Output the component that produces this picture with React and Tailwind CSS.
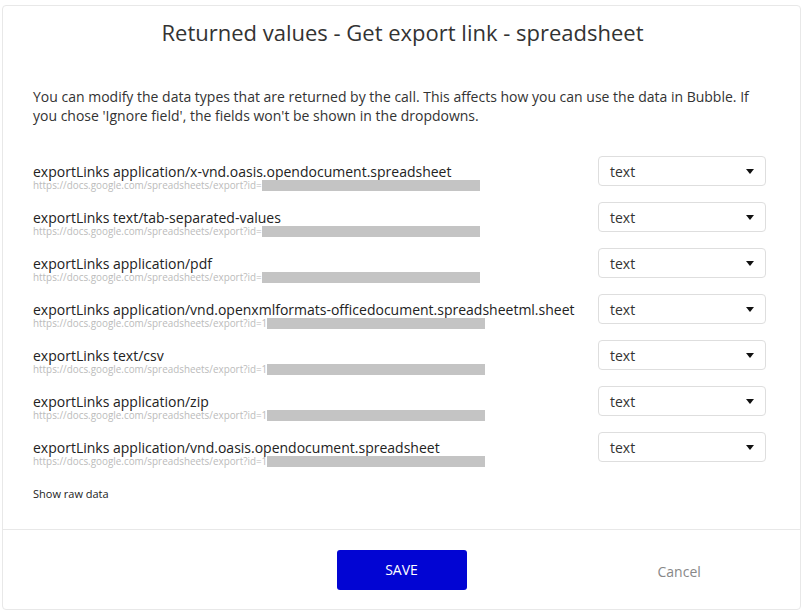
const rows = [
      { label: "exportLinks application/x-vnd.oasis.opendocument.spreadsheet", url: "https://docs.google.com/spreadsheets/export?id=" },
      { label: "exportLinks text/tab-separated-values", url: "https://docs.google.com/spreadsheets/export?id=" },
      { label: "exportLinks application/pdf", url: "https://docs.google.com/spreadsheets/export?id=" },
      { label: "exportLinks application/vnd.openxmlformats-officedocument.spreadsheetml.sheet", url: "https://docs.google.com/spreadsheets/export?id=1" },
      { label: "exportLinks text/csv", url: "https://docs.google.com/spreadsheets/export?id=1" },
      { label: "exportLinks application/zip", url: "https://docs.google.com/spreadsheets/export?id=1" },
      { label: "exportLinks application/vnd.oasis.opendocument.spreadsheet", url: "https://docs.google.com/spreadsheets/export?id=1" },
];

function TypeSelect() {
      return (
            <div className="w-[168px] h-[30px] flex items-center justify-between pl-[11px] pr-[11px] border border-[#dedede] rounded-[4px] bg-white text-[14px] text-[#333]">
                  <span>text</span>
                  <svg width="8" height="5" viewBox="0 0 8 5">
                        <path d="M0 0 L8 0 L4 5 Z" fill="#111" />
                  </svg>
            </div>
      );
}

export default function App() {
      return (
            <div className="w-[802px] h-[613px] bg-white pt-[5px] pl-[2px] font-['Open_Sans',sans-serif]">
                  <div className="w-[799px] h-[605px] border border-[#e8e8e8] rounded-[4px] flex flex-col">
                        <div className="h-[523px]">
                              <h1 className="pt-[11px] pl-[2px] text-center text-[22px] leading-[30px] text-[#333]">
                                    Returned values - Get export link - spreadsheet
                              </h1>
                              <div className="pl-[30px] pr-[34px]">
                                    <p className="mt-[40px] text-[14px] leading-[19px] text-[#333]">
                                          You can modify the data types that are returned by the call. This affects how you can use the data in Bubble. If you chose 'Ignore field', the fields won't be shown in the dropdowns.
                                    </p>
                                    <div className="mt-[31px]">
                                          {rows.map((row) => (
                                                <div key={row.label} className="h-[46px] flex justify-between">
                                                      <div className="pt-[8px]">
                                                            <div className="text-[14px] leading-[15px] text-[#222]">{row.label}</div>
                                                            <div className="flex items-center h-[12px]">
                                                                  <span className="text-[9.9px] leading-[12px] text-[#bbb]">{row.url}</span>
                                                                  <span className="inline-block w-[218px] h-[11px] bg-[#c4c4c4]"></span>
                                                            </div>
                                                      </div>
                                                      <TypeSelect />
                                                </div>
                                          ))}
                                    </div>
                                    <div className="mt-[10px] text-[11px] leading-[12px] text-[#222]">Show raw data</div>
                              </div>
                        </div>
                        <div className="flex-1 border-t border-[#e8e8e8] grid grid-cols-[1fr_auto_1fr] items-center">
                              <div></div>
                              <button className="w-[130px] h-[40px] rounded-[3px] bg-[#0205d3] text-white text-[14px]">SAVE</button>
                              <div className="pl-[191px] pt-[4px] text-[14px] text-[#888]">Cancel</div>
                        </div>
                  </div>
            </div>
      );
}
